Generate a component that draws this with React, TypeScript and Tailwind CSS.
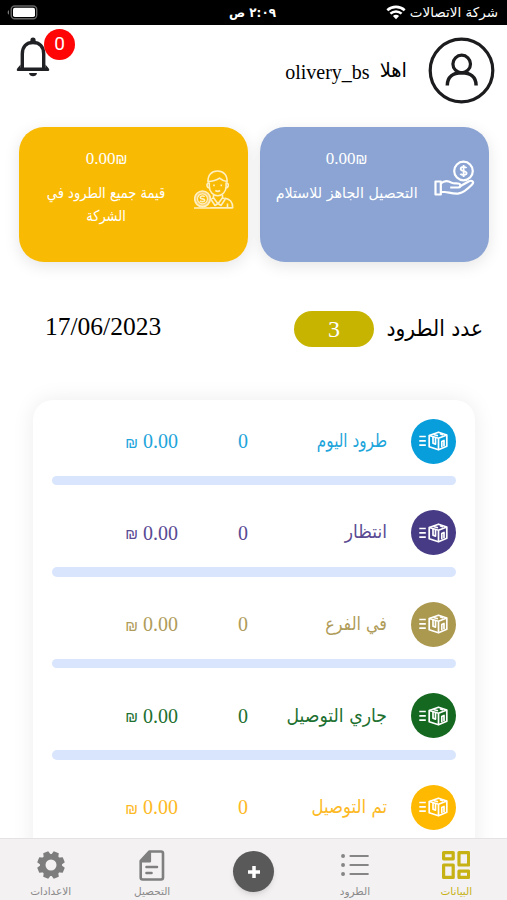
import React from "react";

interface ParcelStatus {
  label: string;
  count: string;
  amount: string;
  text: string;
  bg: string;
  fit: string;
}

const statuses: ParcelStatus[] = [
  { label: "طرود اليوم", count: "0", amount: "0.00", text: "text-[#1ea5db]", bg: "bg-[#079edb]", fit: "scale-x-[0.8]" },
  { label: "انتظار", count: "0", amount: "0.00", text: "text-[#594a93]", bg: "bg-[#483b86]", fit: "scale-x-[0.9]" },
  { label: "في الفرع", count: "0", amount: "0.00", text: "text-[#b09c5a]", bg: "bg-[#ac9950]", fit: "scale-x-[0.84]" },
  { label: "جاري التوصيل", count: "0", amount: "0.00", text: "text-[#1d7030]", bg: "bg-[#156820]", fit: "scale-x-[0.91]" },
  { label: "تم التوصيل", count: "0", amount: "0.00", text: "text-[#fdb924]", bg: "bg-[#ffb900]", fit: "scale-x-[0.87]" },
];

const arabic = "font-['DejaVu_Sans',sans-serif] whitespace-nowrap";

const WifiIcon = () => (
  <svg width="20" height="15" viewBox="0 0 20 15" fill="none" stroke="white" strokeWidth="2.6">
    <path d="M1.300 5.200C6.200.7 13.800.7 18.700 5.200" />
    <path d="M4.400 8.600c3.200-2.900 8-2.900 11.200 0" />
    <path d="M10 14.200 6.900 11c1.800-1.600 4.400-1.600 6.200 0Z" fill="white" stroke="none" />
  </svg>
);

const BatteryIcon = () => (
  <svg width="31" height="15" viewBox="0 0 31 15">
    <path d="M2 5.300v4.400C.2 9.300.2 5.700 2 5.300Z" fill="#777" />
    <rect x="4.200" y="1" width="25.500" height="12.800" rx="3.500" fill="none" stroke="#666" strokeWidth="1.400" />
    <rect x="6" y="2.700" width="22" height="9.400" rx="1.800" fill="white" />
  </svg>
);

const BellIcon = () => (
  <svg width="34" height="40" viewBox="0 0 34 40">
    <circle cx="17" cy="3.200" r="2.600" fill="#202124" />
    <path d="M6.300 31V17C6.300 9.500 10.500 5.500 17 5.500S27.700 9.500 27.700 17v14" fill="none" stroke="#202124" strokeWidth="3.400" />
    <path d="M4.600 27.500 1.400 31.300Q-.2 34 2 34h30q2.200 0 .6-2.700l-3.200-3.800v3H4.600Z" fill="#202124" />
    <path d="M13 36h8c-.5 4.400-7.500 4.400-8 0Z" fill="#202124" />
  </svg>
);

const AvatarIcon = () => (
  <svg width="67" height="67" viewBox="0 0 67 67" fill="none" stroke="#1c1c1e" strokeWidth="3.200">
    <circle cx="33.500" cy="33.500" r="31.300" />
    <circle cx="33.700" cy="27" r="8.800" />
    <path d="M19.300 48.500c0-8.700 5.900-12.700 14.400-12.700S48.100 39.800 48.100 48.500" strokeWidth="3.500" />
  </svg>
);

const HandCoinIcon = () => (
  <svg width="41" height="37" viewBox="0 0 41 37" fill="none" stroke="white" strokeWidth="2.200" strokeLinejoin="round">
    <circle cx="29.500" cy="11" r="9.300" />
    <path d="M32.500 8.100c-1-1.600-5.800-1.700-5.800.8 0 2.900 5.900 1.500 5.900 4.200 0 2.600-5.200 2.400-6.200.7M29.600 5v12" strokeWidth="1.800" />
    <path d="M1.500 21.500h5.300v13H1.500Z" />
    <path d="M6.800 23.500c3-2.800 7.200-3 10.600-.8 1.600 1 4 .7 6.500.8 3 .1 3.400 3.500.5 4h-8.200" />
    <path d="M25.700 26.500 35 21.300c3.300-1.600 5.300 1 3.100 3.100-4.500 4.600-9.300 8.300-13.200 9-5 .9-10.600-1.200-14.200-1.400H6.800" />
  </svg>
);

const CourierIcon = () => (
  <svg width="40" height="39" viewBox="0 0 40 39" fill="none" stroke="#fff0c2" strokeWidth="1.600" strokeLinejoin="round">
    <path d="M14 12.500C13.500 5 17.500 1 23.500 1s10.200 4 9.500 11.500" />
    <path d="M14 11.500c5 0 8.800-1.200 11.500-3.300 2 1.800 4.500 2.900 7.500 3.300" />
    <path d="M15.300 12.500v4c0 5 3.700 9.200 8.400 9.200s8.400-4.200 8.400-9.200v-4" />
    <path d="M15 13c-3 0-2.500 5 .7 5M32.300 13c3 0 2.500 5-.7 5" />
    <path d="M20 14.500v1.800M27.300 14.500v1.800M21.300 20.500c1.500 1 3.400 1 4.800 0" />
    <path d="M19.500 24.500v3.300l4.500 6 4.500-6v-3.300M19.500 27.500l-2.500 2 4 6 3-2 3 2 4-6-2.500-2" />
    <path d="M30.500 28c5.500 1.300 8.200 3.300 8.200 9.800H16.500M33.500 33.500v4M0 38h38.500" />
    <circle cx="8.500" cy="28.800" r="7.800" fill="#fbd170" />
    <circle cx="8.500" cy="28.800" r="5" fill="#f9ba03" strokeWidth="1.200" />
    <path d="M10.700 26.800c-1-1.300-4.500-1-4.500.6 0 2 4.500.9 4.500 2.900 0 1.700-3.700 1.800-4.700.4" />
  </svg>
);

const ParcelIcon = () => (
  <svg width="29" height="20" viewBox="0 0 29 20" fill="none" stroke="white" strokeWidth="1.700" strokeLinejoin="round">
    <path d="M.3 5.500h6.500M.3 9.800h6.500M.3 14.100h6.500" />
    <path d="M10.200 4.500 19.500 1.200l8.300 2.800v11.300l-8.300 3.500-9.300-3.100Z" />
    <path d="m10.200 4.500 9.300 2.700L27.800 4M19.500 7.200v11.600" />
    <path d="m14.500 3.500 4.500 1.200M21 2.800l3 1.200" />
    <path d="M14 6v6.300l2.500.8V7M22.800 16.200v-5.700l2.200-1v5.700" />
  </svg>
);

const GridIcon = () => (
  <svg width="28" height="28" viewBox="0 0 28 28" fill="none" stroke="#c6b214" strokeWidth="3.200" strokeLinejoin="round">
    <rect x="1.600" y="1.600" width="9.600" height="6.200" />
    <rect x="17" y="1.600" width="9.600" height="12.400" />
    <rect x="1.600" y="14" width="9.600" height="12.400" />
    <rect x="17" y="20.200" width="9.600" height="6.200" />
  </svg>
);

const ListIcon = () => (
  <svg width="28" height="24" viewBox="0 0 28 24" fill="none" stroke="#858585" strokeWidth="2.200" strokeLinecap="round">
    <path d="M9.500 3h17.300M9.500 12h17.300M9.500 21h17.300" />
    <path d="M2 3h.1M2 12h.1M2 21h.1" strokeWidth="3.800" />
  </svg>
);

const DocumentIcon = () => (
  <svg width="26" height="31" viewBox="0 0 26 31" fill="none" stroke="#7f7f7f" strokeWidth="2.600" strokeLinejoin="round">
    <path d="M10.500 1.500H22a2 2 0 0 1 2 2v24a2 2 0 0 1-2 2H3.700a2 2 0 0 1-2-2V11Z" />
    <path d="M10.800 2.500v8.800H2.500Z" fill="#7f7f7f" />
    <path d="M7.500 17h10.500M7.500 23h5" strokeLinecap="round" />
  </svg>
);

const gearTeeth = [22.5, 67.5, 112.5, 157.5, 202.5, 247.5, 292.5, 337.5];

const GearIcon = () => (
  <svg width="28" height="28" viewBox="0 0 28 28">
    <g fill="#7d7d7d">
      <circle cx="14" cy="14" r="11" />
      {gearTeeth.map((angle) => (
        <path key={angle} d="M10 5 11.300 .2h5.400L18 5Z" transform={`rotate(${angle} 14 14)`} />
      ))}
    </g>
    <circle cx="14" cy="14" r="5.500" fill="#f3f1f2" />
  </svg>
);

const StatusRow = ({ status }: { status: ParcelStatus }) => (
  <div className="h-[91.600px]">
    <div className={`flex h-[45px] items-center ${status.text}`}>
      <div className={`flex size-[45px] shrink-0 items-center justify-center rounded-full ${status.bg}`}>
        <ParcelIcon />
      </div>
      <div className={`mr-6 w-[130px] origin-right pb-0.5 text-[19px] ${arabic} ${status.fit}`}>{status.label}</div>
      <div className="w-7 text-center text-xl">{status.count}</div>
      <div dir="ltr" className="mr-[51px] flex items-center gap-[5px] text-xl">
        <span className="pt-0.5 font-['Liberation_Sans',sans-serif] text-[15px]">₪</span>
        <span>{status.amount}</span>
      </div>
    </div>
    <div className="mt-3 h-[9.600px] rounded-full bg-[#d8e5fd]" />
  </div>
);

interface BalanceCardProps {
  bg: string;
  icon: React.ReactNode;
  children: React.ReactNode;
}

const BalanceCard = ({ bg, icon, children }: BalanceCardProps) => (
  <div className={`flex flex-1 rounded-[25px] pr-[14px] shadow-[0_4px_16px_rgba(0,0,0,0.1)] ${bg}`}>
    {icon}
    <div className="mr-[12px] flex w-[150px] flex-col items-center pt-[21px]">
      <span dir="ltr" className="text-[17px] leading-[22px]">
        0.00<span className="font-['Liberation_Sans',sans-serif] text-[14px]">₪</span>
      </span>
      {children}
    </div>
  </div>
);

interface TabProps {
  label: string;
  icon: React.ReactNode;
  active?: boolean;
}

const Tab = ({ label, icon, active }: TabProps) => (
  <div className="flex w-[101.400px] flex-col items-center">
    <div className="mt-[9px] flex h-[34px] items-center justify-center">{icon}</div>
    <span className={`${arabic} text-[10.500px] leading-[18px] ${active ? "text-[#c6b214]" : "text-[#8a8a8a]"}`}>
      {label}
    </span>
  </div>
);

export default function App() {
  return (
    <div
      dir="rtl"
      className="flex h-[900px] w-[507px] flex-col overflow-hidden bg-white font-['Liberation_Serif','DejaVu_Sans',serif] text-black"
    >
      {/* Status bar */}
      <div className="grid h-[25px] shrink-0 grid-cols-3 items-center bg-black pr-[9px] pl-[7px] text-white">
        <div className="flex items-center gap-1">
          <span className={`${arabic} text-[13.500px]`}>شركة الاتصالات</span>
          <WifiIcon />
        </div>
        <div className={`${arabic} text-center text-[13px] font-bold`}>
          <span className="inline-block scale-x-[0.92]">٢:٠٩ ص</span>
        </div>
        <div className="flex justify-end">
          <BatteryIcon />
        </div>
      </div>

      {/* Header */}
      <header className="flex h-[102px] shrink-0 items-start pt-3 pr-3 pl-4">
        <AvatarIcon />
        <div className="mt-[20px] mr-[21px] flex items-center gap-[10px] text-xl leading-7">
          <span className={`${arabic} pb-0.5 text-[19.500px]`}>اهلا</span>
          <span>olivery_bs</span>
        </div>
        <div className="relative mr-auto">
          <BellIcon />
          <span className="absolute -top-[8px] left-[28px] flex size-[31px] items-center justify-center rounded-full bg-[#ff0505] font-['Roboto',sans-serif] text-[19px] text-white">
            0
          </span>
        </div>
      </header>

      {/* Balance cards */}
      <section className="flex h-[135px] shrink-0 gap-3 px-[18.500px] text-white">
        <BalanceCard
          bg="bg-[#8ba4d3]"
          icon={
            <div className="mt-[33px]">
              <HandCoinIcon />
            </div>
          }
        >
          <p className={`${arabic} mt-[12px] text-center text-[15px] leading-[23px]`}>
            <span className="inline-block scale-x-[0.95]">التحصيل الجاهز للاستلام</span>
          </p>
        </BalanceCard>
        <BalanceCard
          bg="bg-[#f9ba03]"
          icon={
            <div className="mt-[43px]">
              <CourierIcon />
            </div>
          }
        >
          <p className={`${arabic} mt-[12px] scale-x-[0.87] text-center text-[15px] leading-[23px]`}>
            قيمة جميع الطرود في
            <br />
            الشركة
          </p>
        </BalanceCard>
      </section>

      {/* Parcel count */}
      <section className="mt-[49px] flex h-9 shrink-0 items-center pr-6 pl-[45px]">
        <span className={`${arabic} w-[95px] origin-right scale-x-[0.92] pb-0.5 text-[22px]`}>عدد الطرود</span>
        <span className="mr-[14px] flex h-9 w-20 items-center justify-center rounded-full bg-[#c7b400] text-2xl text-white">
          3
        </span>
        <span className="mr-auto pb-1 text-[25.500px]">17/06/2023</span>
      </section>

      {/* Parcels by status */}
      <main className="min-h-0 flex-1 overflow-hidden pt-[53px] pr-8 pl-[33px]">
        <div className="h-[600px] w-[442px] rounded-[20px] bg-white px-[19px] pt-[18.500px] shadow-[0_0_22px_rgba(0,0,0,0.08)]">
          {statuses.map((status) => (
            <StatusRow key={status.label} status={status} />
          ))}
        </div>
      </main>

      {/* Bottom tabs */}
      <nav className="flex h-[62px] shrink-0 border-t border-[#e4e2e3] bg-[#f3f1f2]">
        <Tab label="البيانات" icon={<GridIcon />} active />
        <Tab label="الطرود" icon={<ListIcon />} />
        <div className="flex w-[101.400px] justify-center pt-[12px]">
          <div className="flex size-[41px] items-center justify-center rounded-full bg-[#595959] shadow-md">
            <svg width="14" height="14" viewBox="0 0 14 14" stroke="white" strokeWidth="3.500">
              <path d="M7 1v12M1 7h12" />
            </svg>
          </div>
        </div>
        <Tab label="التحصيل" icon={<DocumentIcon />} />
        <Tab label="الاعدادات" icon={<GearIcon />} />
      </nav>
    </div>
  );
}
